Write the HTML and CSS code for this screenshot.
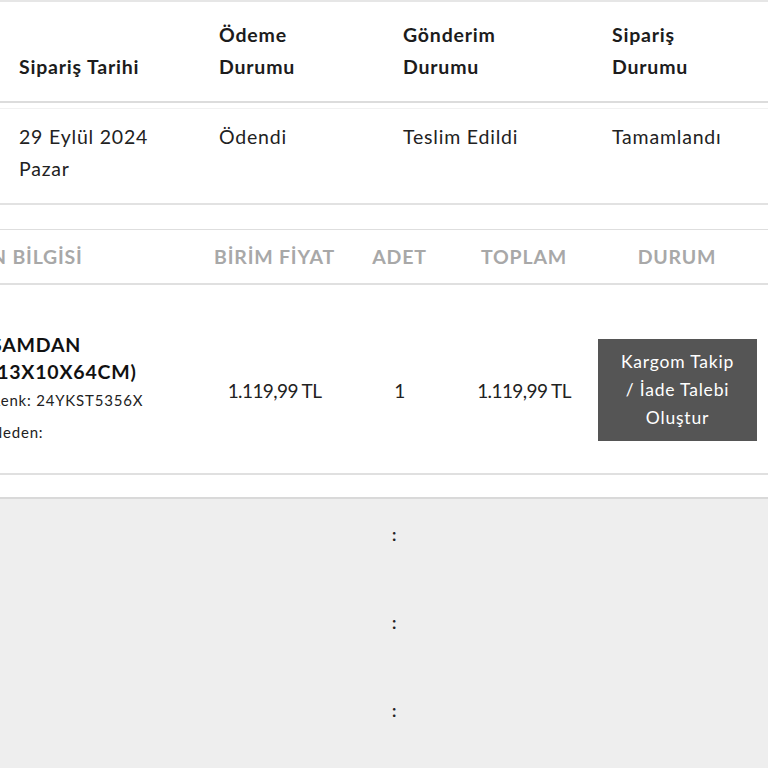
FILE: index.html
```html
<!DOCTYPE html>
<html lang="tr">
<head>
<meta charset="utf-8">
<title>Sipariş Detayı</title>
<link rel="stylesheet" href="styles.css">
</head>
<body>
<div class="page">
  <section class="order-summary">
    <div class="order-head">
      <div class="cell">Sipariş Tarihi</div>
      <div class="cell">Ödeme<br>Durumu</div>
      <div class="cell">Gönderim<br>Durumu</div>
      <div class="cell">Sipariş<br>Durumu</div>
    </div>
    <div class="order-row">
      <div class="cell">29 Eylül 2024<br>Pazar</div>
      <div class="cell">Ödendi</div>
      <div class="cell">Teslim Edildi</div>
      <div class="cell">Tamamlandı</div>
    </div>
  </section>

  <section class="items">
    <div class="items-head">
      <div class="hcell">ÜRÜN BİLGİSİ</div>
      <div class="hcell">BİRİM FİYAT</div>
      <div class="hcell">ADET</div>
      <div class="hcell">TOPLAM</div>
      <div class="hcell">DURUM</div>
    </div>
    <div class="items-row">
      <div class="icell product">
        <div class="thumb"></div>
        <div class="product-text">
          <div class="product-name">ŞAMDAN (13X10X64CM)</div>
          <div class="product-meta">Renk: 24YKST5356X</div>
          <div class="product-meta reason">Neden:</div>
        </div>
      </div>
      <div class="icell num">1.119,99 TL</div>
      <div class="icell num">1</div>
      <div class="icell num">1.119,99 TL</div>
      <div class="icell status">
        <button class="track-btn" type="button">Kargom Takip<br>/ İade Talebi<br>Oluştur</button>
      </div>
    </div>
  </section>

  <section class="totals">
    <div class="total-row"><span class="label"></span><span class="sep">:</span><span class="value"></span></div>
    <div class="total-row"><span class="label"></span><span class="sep">:</span><span class="value"></span></div>
    <div class="total-row"><span class="label"></span><span class="sep">:</span><span class="value"></span></div>
  </section>
</div>
</body>
</html>
```

FILE: styles.css
```css
html, body {
  margin: 0;
  padding: 0;
  overflow: hidden;
  background: #ffffff;
}

body {
  font-family: Lato, "Open Sans", sans-serif;
  color: #1c1c1c;
  letter-spacing: 0.8px;
}

.page {
  width: 768px;
  height: 768px;
  display: flex;
  flex-direction: column;
  border-top: 2px solid #e6e6e6;
  box-sizing: border-box;
}

/* order status table */
.order-head,
.order-row {
  display: grid;
  grid-template-columns: 200px 184px 209px 1fr;
}

.order-head {
  font-weight: 700;
  font-size: 19.5px;
  line-height: 32px;
  border-bottom: 2px solid #dcdcdc;
  align-items: end;
}

.order-head .cell {
  padding: 17px 0 18px 19px;
}

.order-row {
  font-size: 19.5px;
  line-height: 32px;
  margin-top: 5px;
  border-top: 1px solid #f1f1f1;
  border-bottom: 2px solid #e2e2e2;
  color: #222222;
}

.order-row .cell {
  padding: 12px 0 18px 19px;
}

/* product lines */
.items {
  margin-top: 24px;
  margin-left: -182px;
  width: 950px;
  border-top: 1px solid #dedede;
}

.items-head,
.items-row {
  display: grid;
  grid-template-columns: 394px 125px 125px 124px 182px;
}

.items-head {
  border-bottom: 2px solid #e0e0e0;
}

.hcell {
  text-align: center;
  font-weight: 700;
  font-size: 19.5px;
  line-height: 28px;
  color: #a8a8a8;
  padding: 13px 0 12px;
}

.items-row {
  border-bottom: 2px solid #e0e0e0;
}

.icell {
  padding: 40px 0 18px;
  display: flex;
  align-items: center;
  justify-content: center;
  font-size: 19px;
}

.product {
  justify-content: flex-start;
  gap: 33px;
  padding-left: 6px;
}

.thumb {
  width: 134px;
  height: 130px;
  background: #f4f4f4;
  flex: none;
}

.product-text {
  width: 215px;
  margin-top: -8px;
}

.product-name {
  font-weight: 700;
  font-size: 19.5px;
  line-height: 27px;
  color: #111111;
}

.product-meta {
  font-size: 15px;
  line-height: 20px;
  margin-top: 5px;
  color: #222222;
}

.product-meta.reason {
  margin-top: 12px;
}

.num {
  color: #222222;
  letter-spacing: -0.6px;
}

.status {
  padding-left: 12px;
  padding-right: 11px;
}

.track-btn {
  width: 100%;
  background: #555555;
  color: #ffffff;
  border: 0;
  font-family: inherit;
  font-size: 17.5px;
  letter-spacing: 0.8px;
  line-height: 28px;
  padding: 9px 0;
  text-align: center;
}

/* totals */
.totals {
  margin-top: 22px;
  flex: 1;
  background: #eeeeee;
  border-top: 2px solid #d9d9d9;
  padding-top: 24px;
}

.total-row {
  display: grid;
  grid-template-columns: 392px 10px 1fr;
  height: 88px;
  font-size: 17px;
  font-weight: 700;
  line-height: 24px;
  color: #222222;
}
```
